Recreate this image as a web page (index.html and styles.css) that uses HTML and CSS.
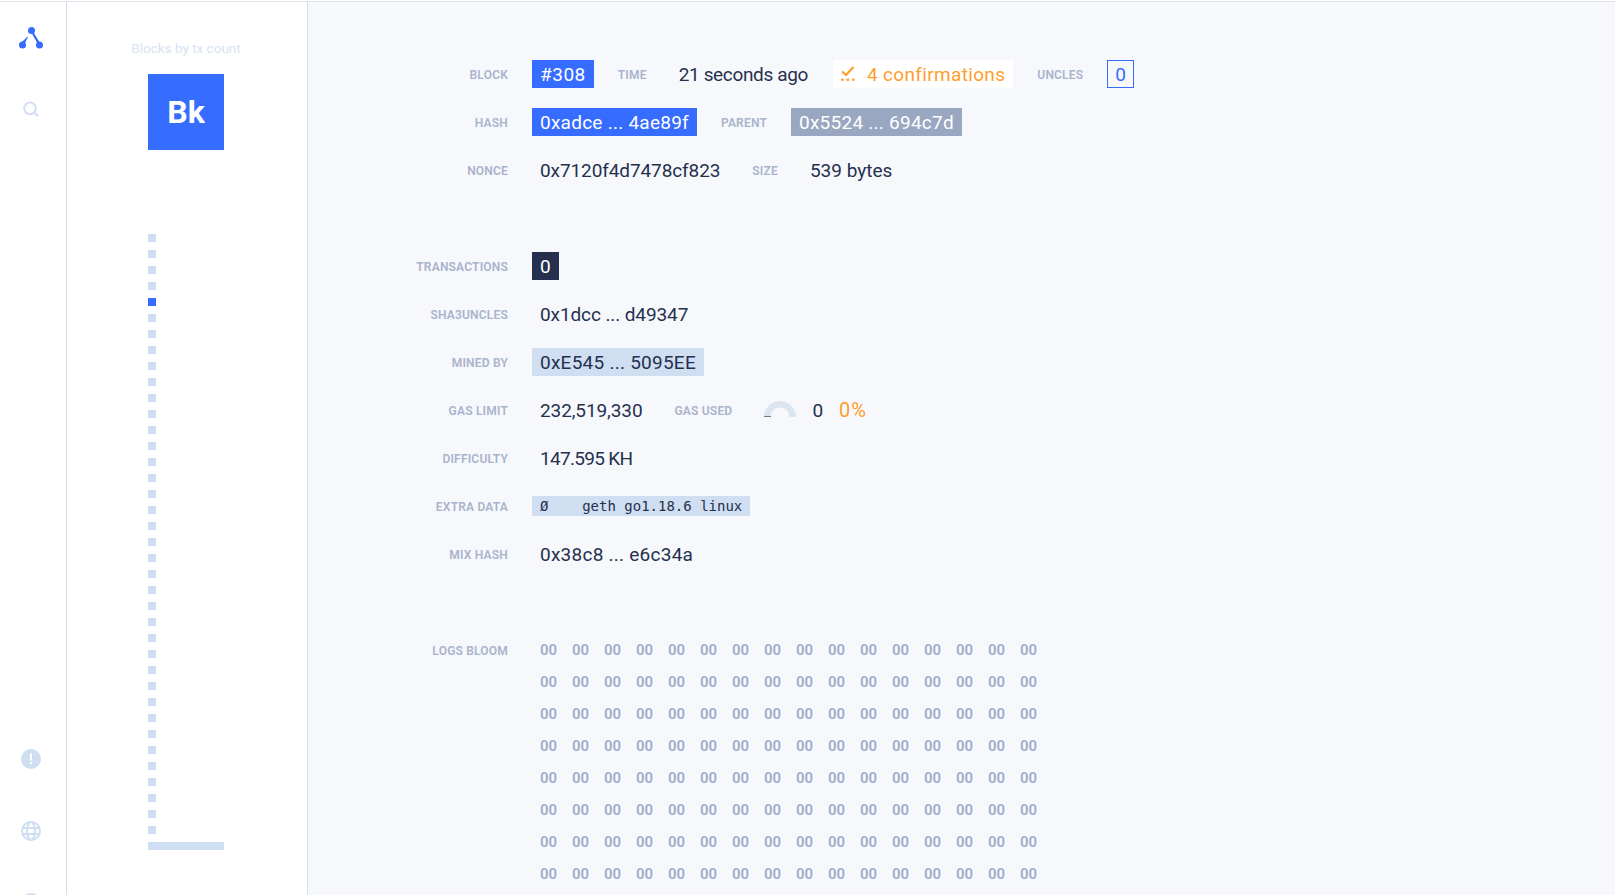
FILE: index.html
```html
<!DOCTYPE html>
<html lang="en">
<head>
<meta charset="utf-8">
<title>Block explorer</title>
<link rel="stylesheet" href="styles.css">
</head>
<body>
<div class="app">
  <nav class="nav">
    <svg class="nav-icon" viewBox="0 0 24 24"><g fill="#366cff"><circle cx="12.5" cy="4.5" r="3.5"/><circle cx="3.5" cy="19" r="3.5"/><circle cx="20.5" cy="19" r="3.5"/><path d="M12 6 L14 5.5 L21 17 L19 18.5 Z"/><path d="M8.5 10.5 L9 11 L5 19 L2 17 Z"/></g></svg>
    <svg class="nav-icon nav-search" viewBox="0 0 24 24"><circle cx="11" cy="12.4" r="5.8" fill="none" stroke="#d3dff0" stroke-width="2"/><path d="M15.2 16.6 L19 20.2" stroke="#d3dff0" stroke-width="2.2" fill="none"/></svg>
    <svg class="nav-icon nav-alert" viewBox="0 0 24 24"><circle cx="12" cy="12" r="10" fill="#cfdef1"/><rect x="11" y="6.5" width="2" height="7" fill="#fff"/><rect x="11" y="15" width="2" height="2.2" fill="#fff"/></svg>
    <svg class="nav-icon nav-globe" viewBox="0 0 24 24"><g fill="none" stroke="#cfdef1" stroke-width="2"><circle cx="12" cy="12" r="9"/><ellipse cx="12" cy="12" rx="4" ry="9"/><path d="M3.5 9 H20.5 M3.5 15 H20.5"/></g></svg>
    <svg class="nav-icon nav-more" viewBox="0 0 24 24"><circle cx="12" cy="12" r="10" fill="#cfdef1"/></svg>
  </nav>

  <aside class="chain">
    <div class="chain-title">Blocks by tx count</div>
    <div class="chain-tile">Bk</div>
    <div class="chain-dots">
      <i class="dot"></i><i class="dot"></i><i class="dot"></i><i class="dot"></i><i class="dot dot-active"></i><i class="dot"></i><i class="dot"></i><i class="dot"></i><i class="dot"></i><i class="dot"></i>
      <i class="dot"></i><i class="dot"></i><i class="dot"></i><i class="dot"></i><i class="dot"></i><i class="dot"></i><i class="dot"></i><i class="dot"></i><i class="dot"></i><i class="dot"></i>
      <i class="dot"></i><i class="dot"></i><i class="dot"></i><i class="dot"></i><i class="dot"></i><i class="dot"></i><i class="dot"></i><i class="dot"></i><i class="dot"></i><i class="dot"></i>
      <i class="dot"></i><i class="dot"></i><i class="dot"></i><i class="dot"></i><i class="dot"></i><i class="dot"></i><i class="dot"></i><i class="dot"></i>
    </div>
    <div class="chain-bar"></div>
  </aside>

  <main class="main">
    <section class="group">
      <div class="row">
        <span class="label">Block</span><span class="chip chip-blue chip-number">#308</span>
        <span class="label-inline">Time</span><span class="chip text-time">21 seconds ago</span>
        <span class="chip chip-white"><svg class="check" viewBox="0 0 14 15"><path d="M1 5.5 L5 9 L12.5 1" fill="none" stroke="#ff9d2e" stroke-width="2.2"/><rect x="0" y="12.6" width="2.6" height="2.2" fill="#ff9d2e"/><rect x="5.5" y="12.6" width="2.6" height="2.2" fill="#ff9d2e"/><rect x="11" y="12.6" width="2.6" height="2.2" fill="#ff9d2e"/></svg>4 confirmations</span>
        <span class="label-inline">Uncles</span><span class="chip chip-outline">0</span>
      </div>
      <div class="row">
        <span class="label">Hash</span><span class="chip chip-blue text-wide">0xadce ... 4ae89f</span>
        <span class="label-inline">Parent</span><span class="chip chip-gray text-wide">0x5524 ... 694c7d</span>
      </div>
      <div class="row">
        <span class="label">Nonce</span><span class="chip text-tight">0x7120f4d7478cf823</span>
        <span class="label-inline">Size</span><span class="chip">539 bytes</span>
      </div>
    </section>

    <section class="group">
      <div class="row">
        <span class="label">Transactions</span><span class="chip chip-dark">0</span>
      </div>
      <div class="row">
        <span class="label">Sha3Uncles</span><span class="chip text-tight">0x1dcc ... d49347</span>
      </div>
      <div class="row">
        <span class="label">Mined by</span><span class="chip chip-pale text-wide">0xE545 ... 5095EE</span>
      </div>
      <div class="row">
        <span class="label">Gas limit</span><span class="chip text-tight">232,519,330</span>
        <span class="label-inline">Gas used</span>
        <span class="gas">
          <svg class="gauge" viewBox="0 0 32 16"><path d="M0 16 A16 16 0 0 1 32 16 H25.5 A9.5 9.5 0 0 0 6.5 16 Z" fill="#dbe5f0"/><rect x="0" y="15" width="7" height="1" fill="#6b7a99"/></svg>
          <span class="gas-value">0</span><span class="gas-pct">0%</span>
        </span>
      </div>
      <div class="row">
        <span class="label">Difficulty</span><span class="chip text-narrow">147.595 KH</span>
      </div>
      <div class="row">
        <span class="label">Extra data</span><span class="chip-mono">Ø    geth go1.18.6 linux</span>
      </div>
      <div class="row">
        <span class="label">Mix hash</span><span class="chip text-wide">0x38c8 ... e6c34a</span>
      </div>
    </section>

    <section class="bloom-row">
      <span class="label bloom-label">Logs bloom</span>
      <div class="bloom">
        <span>00</span><span>00</span><span>00</span><span>00</span><span>00</span><span>00</span><span>00</span><span>00</span><span>00</span><span>00</span><span>00</span><span>00</span><span>00</span><span>00</span><span>00</span><span>00</span>
        <span>00</span><span>00</span><span>00</span><span>00</span><span>00</span><span>00</span><span>00</span><span>00</span><span>00</span><span>00</span><span>00</span><span>00</span><span>00</span><span>00</span><span>00</span><span>00</span>
        <span>00</span><span>00</span><span>00</span><span>00</span><span>00</span><span>00</span><span>00</span><span>00</span><span>00</span><span>00</span><span>00</span><span>00</span><span>00</span><span>00</span><span>00</span><span>00</span>
        <span>00</span><span>00</span><span>00</span><span>00</span><span>00</span><span>00</span><span>00</span><span>00</span><span>00</span><span>00</span><span>00</span><span>00</span><span>00</span><span>00</span><span>00</span><span>00</span>
        <span>00</span><span>00</span><span>00</span><span>00</span><span>00</span><span>00</span><span>00</span><span>00</span><span>00</span><span>00</span><span>00</span><span>00</span><span>00</span><span>00</span><span>00</span><span>00</span>
        <span>00</span><span>00</span><span>00</span><span>00</span><span>00</span><span>00</span><span>00</span><span>00</span><span>00</span><span>00</span><span>00</span><span>00</span><span>00</span><span>00</span><span>00</span><span>00</span>
        <span>00</span><span>00</span><span>00</span><span>00</span><span>00</span><span>00</span><span>00</span><span>00</span><span>00</span><span>00</span><span>00</span><span>00</span><span>00</span><span>00</span><span>00</span><span>00</span>
        <span>00</span><span>00</span><span>00</span><span>00</span><span>00</span><span>00</span><span>00</span><span>00</span><span>00</span><span>00</span><span>00</span><span>00</span><span>00</span><span>00</span><span>00</span><span>00</span>
      </div>
    </section>
  </main>
</div>
</body>
</html>
```

FILE: styles.css
```css
* { box-sizing: border-box; }
html, body { margin: 0; height: 100%; overflow: hidden; }
body {
  font-family: Roboto, "Liberation Sans", sans-serif;
  color: #25304f;
  background: #fff;
}
.app {
  display: flex;
  height: 894px;
  margin-top: 1px;
  overflow: hidden;
  border-top: 1px solid #dfe2e7;
}
.nav {
  flex: 0 0 67px;
  display: flex;
  flex-direction: column;
  align-items: center;
  padding: 24px 5px 0 0;
  background: #fff;
  border-right: 1px solid #cfdef1;
}
.nav-icon { flex: none; width: 24px; height: 24px; display: block; }
.nav-search { margin-top: 46px; }
.nav-alert { margin-top: 627px; }
.nav-globe { margin-top: 48px; }
.nav-more { margin-top: 48px; }

.chain {
  flex: 0 0 241px;
  display: flex;
  flex-direction: column;
  padding: 38px 0 0 81px;
  background: #fff;
  border-right: 1px solid #cfdef1;
}
.chain-title {
  width: 76px;
  display: flex;
  justify-content: center;
  white-space: nowrap;
  font-size: 13.5px;
  line-height: 16px;
  color: #d8e3f3;
}
.chain-tile {
  width: 76px;
  height: 76px;
  margin-top: 18px;
  display: flex;
  align-items: center;
  justify-content: center;
  background: #366cff;
  color: #fff;
  font-size: 32px;
  font-weight: 700;
}
.chain-dots {
  display: flex;
  flex-direction: column;
  gap: 8px;
  margin-top: 84px;
}
.dot { display: block; width: 8px; height: 8px; background: #cfdef1; }
.dot-active { background: #366cff; }
.chain-bar { width: 76px; height: 8px; margin-top: 8px; background: #cfdef1; }

.main { flex: 1; padding: 58px 0 0 40px; min-width: 0; background: #f7f8fb; }
.group { display: flex; flex-direction: column; gap: 20px; margin-bottom: 68px; }
.row { display: flex; align-items: center; gap: 24px; height: 28px; white-space: nowrap; }
.label, .label-inline {
  padding-top: 2px;
  font-size: 12px;
  font-weight: 600;
  letter-spacing: 0.2px;
  text-transform: uppercase;
  color: #a9b3cc;
}
.label { flex: none; width: 160px; text-align: right; }
.chip {
  display: block;
  height: 28px;
  padding: 0 8px;
  font-size: 19px;
  line-height: 30px;
  color: #25304f;
}
.chip-number { letter-spacing: 0.5px; }
.text-wide { letter-spacing: 0.25px; }
.text-tight { letter-spacing: -0.1px; }
.text-time { letter-spacing: -0.35px; }
.text-narrow { letter-spacing: -0.7px; }
.chip-blue { background: #366cff; color: #fff; }
.chip-gray { background: #9aa7c1; color: #fff; }
.chip-dark { background: #25304f; color: #fff; }
.chip-pale { background: #cfdef1; }
.chip-white {
  display: flex;
  align-items: center;
  gap: 12px;
  margin-left: -7px;
  padding-top: 2px;
  background: #fff;
  color: #ff9d2e;
  letter-spacing: 0.33px;
}
.chip-outline { border: 1px solid #366cff; color: #366cff; line-height: 28px; padding: 0 7px; }
.check { width: 14px; height: 15px; flex: none; margin-top: -3px; }
.chip-mono {
  display: block;
  height: 20px;
  padding: 0 8px;
  background: #cfdef1;
  font-family: "DejaVu Sans Mono", monospace;
  font-size: 14px;
  line-height: 20px;
  white-space: pre;
  color: #25304f;
}
.gas { display: flex; align-items: center; margin-left: 8px; font-size: 19px; }
.gauge { width: 32px; height: 16px; display: block; margin-top: -2px; }
.gas-value { margin-left: 16px; }
.gas-pct { margin-left: 16px; font-size: 20px; letter-spacing: 1px; color: #ff9d2e; }

.bloom-row { display: flex; gap: 32px; margin-top: -2px; }
.bloom-label { height: 32px; line-height: 30px; }
.bloom {
  display: grid;
  grid-template-columns: repeat(16, 32px);
  grid-auto-rows: 32px;
  font-size: 15px;
  font-weight: 600;
  line-height: 32px;
  color: #a1aecb;
}
```
